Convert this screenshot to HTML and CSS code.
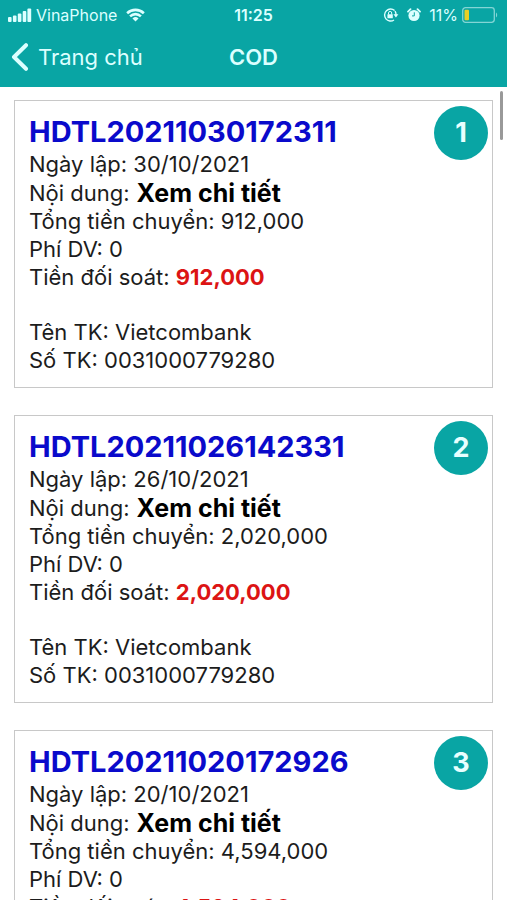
FILE: index.html
```html
<!DOCTYPE html>
<html lang="vi">
<head>
<meta charset="utf-8">
<meta name="viewport" content="width=device-width, initial-scale=1">
<title>COD</title>
<link rel="stylesheet" href="styles.css">
</head>
<body>
<div class="screen">
  <header class="header">
    <div class="status">
      <div class="status-left">
        <svg class="signal" width="24" height="14" viewBox="0 0 24 14" aria-hidden="true"><g fill="currentColor"><rect x="0" y="9" width="3.6" height="5" rx="1"/><rect x="4.9" y="7.5" width="3.6" height="6.5" rx="1"/><rect x="9.8" y="5.5" width="3.6" height="8.5" rx="1"/><rect x="14.7" y="3" width="3.6" height="11" rx="1"/><rect x="19.4" y="0.5" width="3.8" height="13.5" rx="1"/></g></svg>
        <span class="carrier">VinaPhone</span>
        <svg class="wifi" width="19" height="14" viewBox="0 0 20 14" aria-hidden="true"><g fill="none" stroke="currentColor" stroke-width="2.7"><path d="M1.2 5.2a12.6 12.6 0 0 1 17.6 0"/><path d="M4.3 8.4a8.2 8.2 0 0 1 11.4 0"/></g><path d="M10 13.8L6.8 10.6a4.6 4.6 0 0 1 6.4 0z" fill="currentColor"/></svg>
      </div>
      <span class="clock">11:25</span>
      <div class="status-right">
        <svg width="16" height="14" viewBox="0 0 16 14" aria-hidden="true"><path d="M11.6 2.6A6 6 0 1 0 11 12M12 3.2A6 6 0 0 1 13 7" fill="none" stroke="currentColor" stroke-width="1.4"/><path d="M10.4 6.2h5l-2.5 3.3z" fill="currentColor"/><rect x="4.4" y="6.2" width="5.4" height="4" rx=".5" fill="currentColor"/><path d="M5.5 6.5V5a1.6 1.6 0 0 1 3.2 0v1.5" fill="none" stroke="currentColor" stroke-width="1"/></svg>
        <svg class="alarm" width="14" height="14" viewBox="0 0 14 14" aria-hidden="true"><circle cx="7" cy="7.5" r="5.6" fill="currentColor"/><path d="M1 3.7L3.5 1.2M13 3.7L10.5 1.2" stroke="currentColor" stroke-width="1.8" stroke-linecap="round"/><path d="M7.3 4.3v3.6H5" fill="none" stroke="#09a5a4" stroke-width="1"/></svg>
        <span class="percent">11%</span>
        <svg class="battery" width="37" height="16" viewBox="0 0 37 16" aria-hidden="true"><rect x=".7" y=".7" width="31.6" height="14.6" rx="2.8" fill="none" stroke="#83d5d5" stroke-width="1.3"/><rect x="2.5" y="2.7" width="4.5" height="10.6" rx="1" fill="#e9cf25"/><path d="M34 5.5a3.2 3.2 0 0 1 0 5z" fill="#83d5d5"/></svg>
      </div>
    </div>
    <nav class="nav">
      <a class="back" href="#">
        <svg width="18" height="28" viewBox="0 0 18 28" aria-hidden="true"><path d="M15 2.2L3 14l12 11.8" fill="none" stroke="currentColor" stroke-width="4" stroke-linecap="round" stroke-linejoin="round"/></svg>
        <span>Trang chủ</span>
      </a>
      <h1 class="title">COD</h1>
    </nav>
  </header>
  <main class="list">
    <article class="card">
      <span class="badge">1</span>
      <h2 class="code">HDTL20211030172311</h2>
      <p class="line">Ngày lập: 30/10/2021</p>
      <p class="line detail">Nội dung: <a class="more" href="#">Xem chi tiết</a></p>
      <p class="line">Tổng tiền chuyển: 912,000</p>
      <p class="line">Phí DV: 0</p>
      <p class="line">Tiền đối soát: <strong class="amount">912,000</strong></p>
      <p class="line account">Tên TK: Vietcombank</p>
      <p class="line">Số TK: 0031000779280</p>
    </article>
    <article class="card">
      <span class="badge">2</span>
      <h2 class="code">HDTL20211026142331</h2>
      <p class="line">Ngày lập: 26/10/2021</p>
      <p class="line detail">Nội dung: <a class="more" href="#">Xem chi tiết</a></p>
      <p class="line">Tổng tiền chuyển: 2,020,000</p>
      <p class="line">Phí DV: 0</p>
      <p class="line">Tiền đối soát: <strong class="amount">2,020,000</strong></p>
      <p class="line account">Tên TK: Vietcombank</p>
      <p class="line">Số TK: 0031000779280</p>
    </article>
    <article class="card">
      <span class="badge">3</span>
      <h2 class="code">HDTL20211020172926</h2>
      <p class="line">Ngày lập: 20/10/2021</p>
      <p class="line detail">Nội dung: <a class="more" href="#">Xem chi tiết</a></p>
      <p class="line">Tổng tiền chuyển: 4,594,000</p>
      <p class="line">Phí DV: 0</p>
      <p class="line">Tiền đối soát: <strong class="amount">4,594,000</strong></p>
    </article>
    <div class="scroll-thumb"></div>
  </main>
</div>
</body>
</html>
```
FILE: styles.css
```css
* {
  box-sizing: border-box;
}

body {
  margin: 0;
  background: #fff;
  color: #1c1c1c;
  font-family: Inter, "Liberation Sans", sans-serif;
}

h1, h2, p {
  margin: 0;
}

a {
  color: inherit;
  text-decoration: none;
}

svg {
  display: block;
  flex: none;
}

.screen {
  display: flex;
  flex-direction: column;
  height: 100vh;
  overflow: hidden;
}

.header {
  flex: none;
  background: #09a5a4;
  color: #dcffff;
}

.status,
.nav {
  display: grid;
  grid-template-columns: 1fr auto 1fr;
  align-items: center;
}

.status {
  height: 30px;
  padding: 0 8px;
  font-size: 16px;
}

.status-left,
.status-right {
  display: flex;
  align-items: center;
}

.status-right {
  justify-content: flex-end;
}

.carrier {
  margin: 0 9px 0 4px;
}

.clock {
  font-weight: 600;
}

.alarm {
  margin: 0 8px;
}

.battery {
  margin-left: 4px;
}

.nav {
  height: 57px;
  padding: 0 11px 3px;
  font-size: 22px;
}

.back {
  display: flex;
  align-items: center;
  gap: 9px;
}

.title {
  font-size: 22px;
  font-weight: 600;
}

.list {
  position: relative;
  flex: 1;
  min-height: 0;
  overflow: hidden;
  padding: 13px 14px 0;
}

.card {
  position: relative;
  margin-bottom: 27px;
  padding: 13px 14px;
  border: 1px solid #c8c8c8;
}

.badge {
  position: absolute;
  top: 5px;
  right: 4px;
  width: 54px;
  height: 54px;
  border-radius: 50%;
  background: #09a5a4;
  color: #e8ffff;
  font-size: 27px;
  font-weight: 700;
  line-height: 54px;
  text-align: center;
}

.code {
  color: #0a0acb;
  font-size: 29px;
  font-weight: 700;
  line-height: 36px;
}

.line {
  font-size: 22px;
  line-height: 28px;
}

.detail {
  display: flex;
  align-items: center;
  gap: 7px;
  height: 29px;
}

.more {
  color: #000;
  font-size: 25px;
  font-weight: 700;
}

.amount {
  color: #dc1414;
  font-weight: 700;
}

.account {
  margin-top: 27px;
}

.scroll-thumb {
  position: absolute;
  top: 4px;
  right: 4px;
  width: 3px;
  height: 49px;
  border-radius: 2px;
  background: #999;
}
```
